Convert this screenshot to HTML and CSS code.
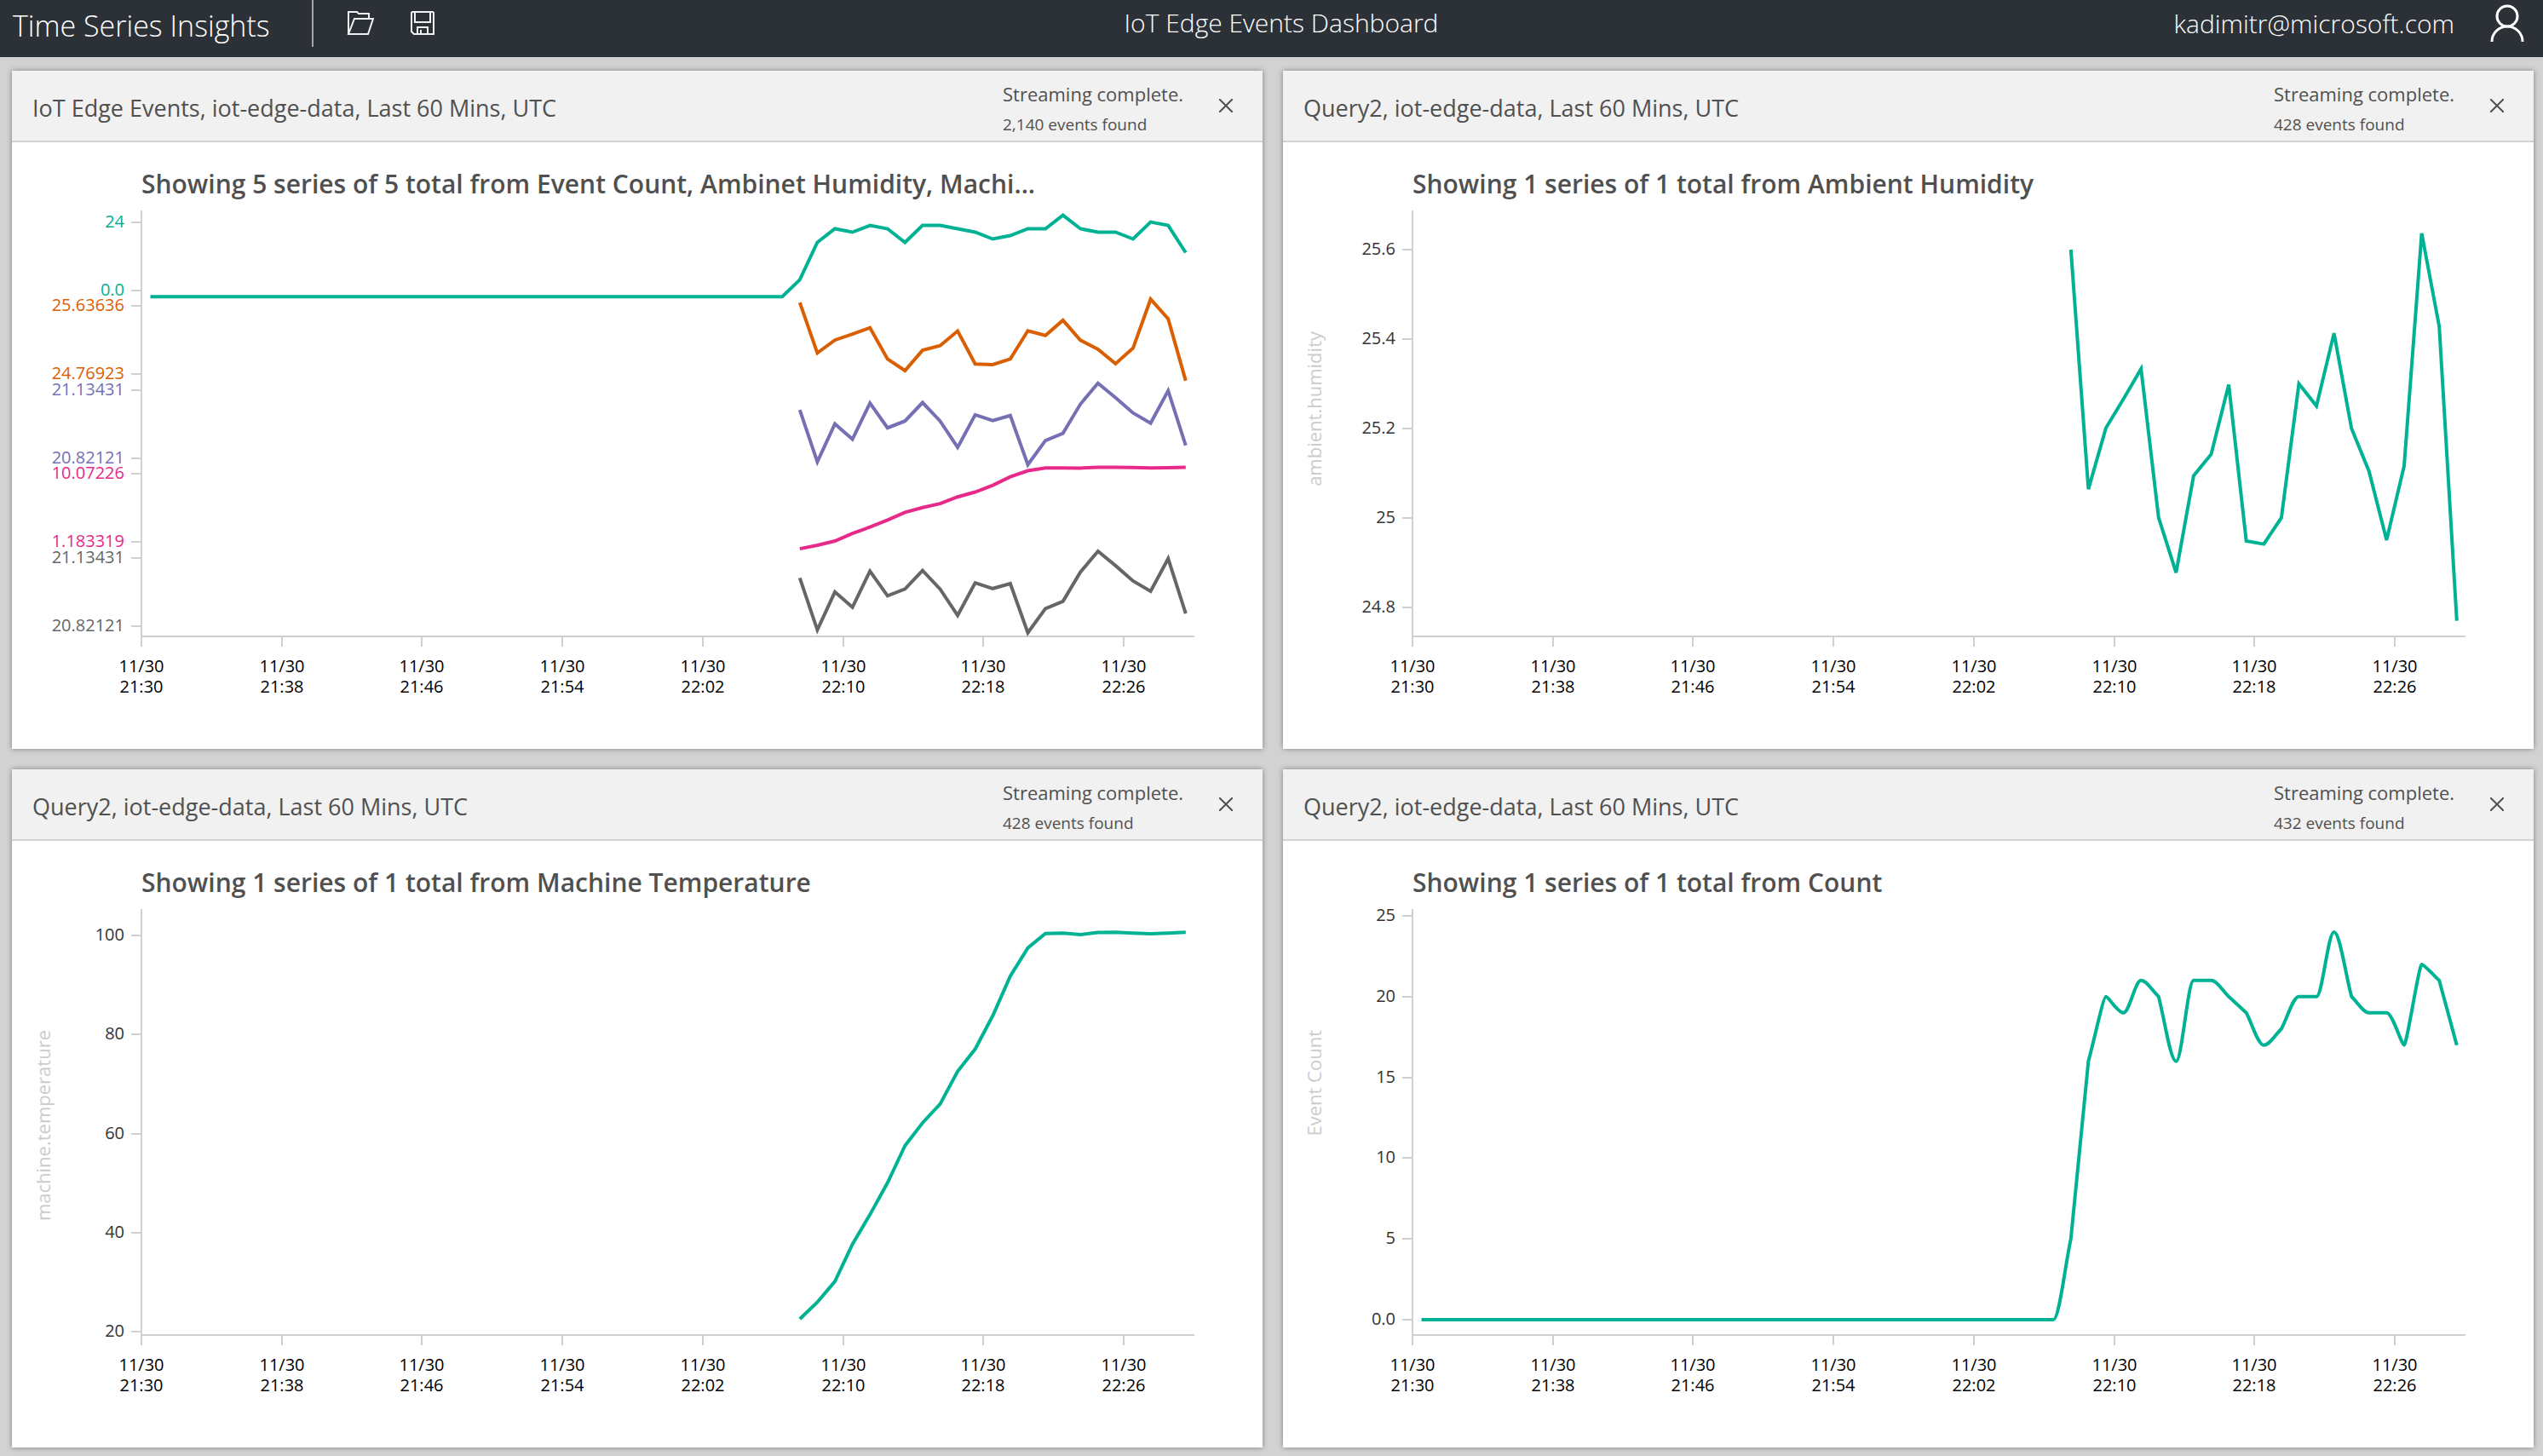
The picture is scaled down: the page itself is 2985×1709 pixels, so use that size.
FILE: index.html
```html
<!DOCTYPE html>
<html lang="en">
<head>
  <meta charset="utf-8">
  <title>IoT Edge Events Dashboard</title>
  <link rel="stylesheet" href="styles.css">
</head>
<body>
  <header class="topbar">
    <div class="topbar-left">
      <a class="brand" href="#">Time Series Insights</a>
      <button class="icon-button" type="button" aria-label="Open">
        <svg class="icon" viewBox="0 1 32 30" aria-hidden="true"><path d="M2 28V2h10l2 2h12v6M2 28L9 10h22l-6 18z"/></svg>
      </button>
      <button class="icon-button" type="button" aria-label="Save">
        <svg class="icon" viewBox="0 1 32 30" aria-hidden="true"><path d="M4 2h24l1 1v25H6l-3-3V3zM7 2v12h18V2M10 28v-8h12v8M14 28v-5"/></svg>
      </button>
    </div>
    <h1 class="page-title">IoT Edge Events Dashboard</h1>
    <div class="topbar-right">
      <span class="user-name">kadimitr@microsoft.com</span>
      <button class="avatar" type="button" aria-label="Account">
        <svg class="avatar-icon" viewBox="0 0 40 46" aria-hidden="true"><circle cx="20" cy="14" r="12"/><path d="M2 44c0-10 8-18 18-18s18 8 18 18"/></svg>
      </button>
    </div>
  </header>

  <main class="dashboard">
    <section class="panel">
      <header class="panel-header">
        <h2 class="panel-name">IoT Edge Events, iot-edge-data, Last 60 Mins, UTC</h2>
        <div class="status"><span class="status-state">Streaming complete.</span><span class="status-count">2,140 events found</span></div>
        <button class="close" type="button" aria-label="Close"><svg class="close-icon" viewBox="0 0 16 16" aria-hidden="true"><path d="M0 0l16 16M16 0L0 16"/></svg></button>
      </header>
      <h3 class="chart-title">Showing 5 series of 5 total from Event Count, Ambinet Humidity, Machi...</h3>
      <svg class="chart" data-chart="all" viewBox="0 80 1468 632" role="img" aria-label="All series"></svg>
    </section>

    <section class="panel">
      <header class="panel-header">
        <h2 class="panel-name">Query2, iot-edge-data, Last 60 Mins, UTC</h2>
        <div class="status"><span class="status-state">Streaming complete.</span><span class="status-count">428 events found</span></div>
        <button class="close" type="button" aria-label="Close"><svg class="close-icon" viewBox="0 0 16 16" aria-hidden="true"><path d="M0 0l16 16M16 0L0 16"/></svg></button>
      </header>
      <h3 class="chart-title">Showing 1 series of 1 total from Ambient Humidity</h3>
      <svg class="chart" data-chart="humidity" viewBox="0 80 1468 632" role="img" aria-label="Ambient humidity"></svg>
    </section>

    <section class="panel">
      <header class="panel-header">
        <h2 class="panel-name">Query2, iot-edge-data, Last 60 Mins, UTC</h2>
        <div class="status"><span class="status-state">Streaming complete.</span><span class="status-count">428 events found</span></div>
        <button class="close" type="button" aria-label="Close"><svg class="close-icon" viewBox="0 0 16 16" aria-hidden="true"><path d="M0 0l16 16M16 0L0 16"/></svg></button>
      </header>
      <h3 class="chart-title">Showing 1 series of 1 total from Machine Temperature</h3>
      <svg class="chart" data-chart="temperature" viewBox="0 80 1468 632" role="img" aria-label="Machine temperature"></svg>
    </section>

    <section class="panel">
      <header class="panel-header">
        <h2 class="panel-name">Query2, iot-edge-data, Last 60 Mins, UTC</h2>
        <div class="status"><span class="status-state">Streaming complete.</span><span class="status-count">432 events found</span></div>
        <button class="close" type="button" aria-label="Close"><svg class="close-icon" viewBox="0 0 16 16" aria-hidden="true"><path d="M0 0l16 16M16 0L0 16"/></svg></button>
      </header>
      <h3 class="chart-title">Showing 1 series of 1 total from Count</h3>
      <svg class="chart" data-chart="count" viewBox="0 80 1468 632" role="img" aria-label="Event count"></svg>
    </section>
  </main>
  <script src="charts.js"></script>
</body>
</html>
```
FILE: styles.css
```css
* {
  box-sizing: border-box;
}

body {
  margin: 0;
  min-height: 100vh;
  display: flex;
  flex-direction: column;
  background: #d2d2d2;
  color: #505050;
  font-family: "Open Sans", "Noto Sans", sans-serif;
}

h1, h2, h3 {
  margin: 0;
  font-weight: 400;
}

button {
  padding: 0;
  border: 0;
  background: none;
  cursor: pointer;
}

svg {
  display: block;
}

/* Top bar */
.topbar {
  display: grid;
  grid-template-columns: 1fr auto 1fr;
  height: 67px;
  padding: 0 22px 0 15px;
  background: #2c3138;
  color: #fff;
  font-weight: 300;
}

.topbar-left,
.topbar-right {
  display: flex;
  align-items: center;
  height: 55px;
}

.topbar-right {
  justify-content: flex-end;
  gap: 42px;
}

.brand {
  display: flex;
  align-items: center;
  width: 353px;
  height: 55px;
  margin-right: 39px;
  padding-top: 5px;
  border-right: 2px solid #a4a7aa;
  color: inherit;
  font-size: 34px;
  text-decoration: none;
}

.icon-button {
  width: 32px;
  margin-right: 41px;
}

.icon {
  width: 32px;
  height: 30px;
  fill: none;
  stroke: #f0f0f0;
  stroke-width: 2;
}

.page-title {
  margin-left: 30px;
  font-size: 30px;
  font-weight: 300;
  line-height: 54px;
}

.user-name {
  font-size: 30px;
}

.avatar-icon {
  width: 40px;
  height: 46px;
  fill: none;
  stroke: #fff;
  stroke-width: 3;
}

/* Panels */
.dashboard {
  flex: 1;
  display: grid;
  grid-template-columns: 1fr 1fr;
  grid-auto-rows: 1fr;
  gap: 24px;
  padding: 16px 11px 10px 14px;
}

.panel {
  display: flex;
  flex-direction: column;
  min-width: 0;
  background: #fff;
  box-shadow: 0 0 6px rgba(0, 0, 0, 0.4);
}

.panel-header {
  display: flex;
  align-items: center;
  height: 84px;
  padding: 0 35px 0 24px;
  border-bottom: 2px solid #d2d2d2;
  background: #f1f1f1;
}

.panel-name {
  flex: 1;
  padding-top: 4px;
  font-size: 27px;
}

.status {
  display: flex;
  flex-direction: column;
  width: 254px;
  padding-top: 8px;
}

.status-state {
  font-size: 22px;
  line-height: 36px;
}

.status-count {
  font-size: 19px;
  line-height: 36px;
}

.close-icon {
  width: 16px;
  height: 16px;
  fill: none;
  stroke: #505050;
  stroke-width: 2;
}

/* Charts */
.chart-title {
  height: 80px;
  padding: 28px 80px 0 152px;
  overflow: hidden;
  font-size: 30px;
  font-weight: 600;
  line-height: 42px;
  white-space: nowrap;
}

.chart {
  flex: 1;
  width: 100%;
  min-height: 0;
  overflow: visible;
}

.axis {
  fill: none;
  stroke: #d0d0d0;
  stroke-width: 2;
}

.tick-label {
  font-size: 20px;
  fill: #333;
}

.time-label {
  fill: #000;
}

.axis-name {
  font-size: 22px;
  fill: #ccc;
}

.line {
  fill: none;
  stroke-width: 4;
}
```
FILE: charts.js
```js
const NS = "http://www.w3.org/2000/svg";

const COLORS = {
  green: "#00b294",
  orange: "#d95f02",
  purple: "#7570b3",
  pink: "#e7298a",
  gray: "#666666"
};

// Per-minute readings, 22:07 to 22:29.
const COUNT = [5, 16, 20, 19, 21, 20, 16, 21, 21, 20, 19, 17, 18, 20, 20, 24, 20, 19, 19, 17, 22, 21, 17];
const HUMIDITY = [25.6, 25.064, 25.201, 25.266, 25.333, 25, 24.877, 25.094, 25.142, 25.298, 24.948, 24.941,
  25, 25.3, 25.25, 25.413, 25.2, 25.104, 24.95, 25.116, 25.63636, 25.428, 24.76923];
const AMBIENT = [21.032, 20.832, 20.978, 20.919, 21.058, 20.963, 20.989, 21.06, 20.989, 20.888, 21.013, 20.991,
  21.01, 20.82121, 20.914, 20.942, 21.054, 21.13431, 21.079, 21.02, 20.981, 21.106, 20.895];
const PRESSURE = [1.183319, 1.565, 2.029, 2.858, 3.555, 4.318, 5.147, 5.678, 6.109, 6.838, 7.369, 8.1,
  9.027, 9.69, 9.99, 9.99, 9.98, 10.06, 10.06, 10.04, 10, 10.03, 10.07226];
const TEMPERATURE = [22.6, 26, 30.2, 37.7, 43.7, 50.1, 57.6, 62.2, 66, 72.6, 77.1, 83.8,
  91.8, 97.5, 100.4, 100.5, 100.2, 100.6, 100.65, 100.5, 100.35, 100.5, 100.65];

const LEFT = 152, RIGHT = 1388, TOP = 80, BOTTOM = 580;
const FIRST_X = 924.8, STEP = 20.59, FLAT_X = 162.5;

function add(svg, name, attrs, text) {
  const el = document.createElementNS(NS, name);
  for (const key in attrs) el.setAttribute(key, attrs[key]);
  if (text !== undefined) el.textContent = text;
  svg.appendChild(el);
}

function timeAxis(svg) {
  add(svg, "path", { class: "axis", d: `M${LEFT} ${TOP}V${BOTTOM}H${RIGHT}` });
  ["21:30", "21:38", "21:46", "21:54", "22:02", "22:10", "22:18", "22:26"].forEach((time, i) => {
    const x = Math.round(LEFT + i * STEP * 8);
    add(svg, "path", { class: "axis", d: `M${x} ${BOTTOM}v12` });
    add(svg, "text", { class: "tick-label time-label", x: x, y: 622, "text-anchor": "middle" }, "11/30");
    add(svg, "text", { class: "tick-label time-label", x: x, y: 646, "text-anchor": "middle" }, time);
  });
}

function valueTick(svg, y, label, color) {
  y = Math.round(y);
  add(svg, "path", { class: "axis", d: `M${LEFT - 12} ${y}h12` });
  const attrs = { class: "tick-label", x: 132, y: y + 6, "text-anchor": "end" };
  if (color) attrs.style = "fill:" + color;
  add(svg, "text", attrs, label);
}

function points(values, toY, flat) {
  const pts = values.map((v, i) => [FIRST_X + i * STEP, toY(v)]);
  if (flat) pts.unshift([FLAT_X, toY(0)], [FIRST_X - STEP, toY(0)]);
  return pts;
}

function line(svg, pts, color) {
  const d = "M" + pts.map(p => p[0].toFixed(1) + " " + p[1].toFixed(1)).join("L");
  add(svg, "path", { class: "line", d: d, stroke: color });
}

// Rounds peaks, troughs and the ends of level runs; other points keep their corner.
const SMALL = 3;

function curve(svg, pts, color, sharp) {
  const rise = i => pts[i + 1][1] - pts[i][1];
  const rounded = i => i > 0 && i < pts.length - 1 && rise(i - 1) * rise(i) <= 0;
  let d = `M${pts[0][0]} ${pts[0][1]}`;
  for (let i = 0; i < pts.length - 1; i++) {
    const [x0, y0] = pts[i], [x1, y1] = pts[i + 1], h = (x1 - x0) / 3, k = (y1 - y0) / 3;
    const c0 = rounded(i) ? [x0 + (sharp.has(i) ? SMALL : h), y0] : [x0 + h, y0 + k];
    const c1 = rounded(i + 1) ? [x1 - (sharp.has(i + 1) ? SMALL : h), y1] : [x1 - h, y1 - k];
    d += `C${c0} ${c1} ${x1} ${y1}`;
  }
  add(svg, "path", { class: "line", d: d, stroke: color });
}

function single(name, label, ticks, toY, values, flat) {
  const svg = document.querySelector(`[data-chart="${name}"]`);
  timeAxis(svg);
  ticks.forEach(t => valueTick(svg, toY(t), t === 0 ? "0.0" : String(t)));
  add(svg, "text", { class: "axis-name", transform: "translate(45 222) rotate(-90)", "text-anchor": "end" }, label);
  const pts = points(values, toY, flat);
  if (flat) curve(svg, pts, COLORS.green, new Set([4, 21, 22]));
  else line(svg, pts, COLORS.green);
}

function stacked() {
  const svg = document.querySelector('[data-chart="all"]');
  timeAxis(svg);
  const lanes = [
    [[...COUNT.slice(0, -1), 13], 0, 24, "0.0", "24", COLORS.green],
    [HUMIDITY, 24.76923, 25.63636, "24.76923", "25.63636", COLORS.orange],
    [AMBIENT, 20.82121, 21.13431, "20.82121", "21.13431", COLORS.purple],
    [PRESSURE, 1.183319, 10.07226, "1.183319", "10.07226", COLORS.pink],
    [AMBIENT, 20.82121, 21.13431, "20.82121", "21.13431", COLORS.gray]
  ];
  lanes.forEach(([values, min, max, low, high, color], i) => {
    const top = 85.6 + i * 98.6;
    const toY = v => top + 95.7 * (max - v) / (max - min);
    valueTick(svg, top + 8, high, color);
    valueTick(svg, top + 88, low, color);
    line(svg, points(values, toY, i === 0), color);
  });
}

stacked();
single("humidity", "ambient.humidity", [25.6, 25.4, 25.2, 25, 24.8], v => 126 + (25.6 - v) * 524.5, HUMIDITY, false);
single("temperature", "machine.temperature", [100, 80, 60, 40, 20], v => 576.4 - (v - 20) * 5.816, TEMPERATURE, false);
single("count", "Event Count", [25, 20, 15, 10, 5, 0], v => 562 - v * 18.96, COUNT, true);
```
